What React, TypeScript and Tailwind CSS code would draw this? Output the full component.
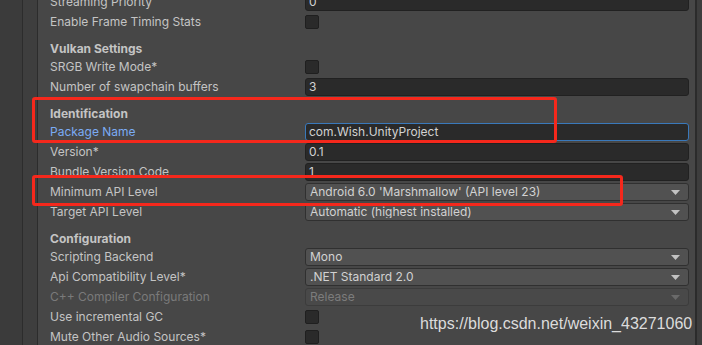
type Row =
  | { kind: "header"; label: string }
  | { kind: "text"; label: string; value: string; focus?: boolean }
  | { kind: "check"; label: string }
  | { kind: "select"; label: string; value: string; disabled?: boolean }

const rows: Row[] = [
  { kind: "text", label: "Streaming Priority", value: "0" },
  { kind: "check", label: "Enable Frame Timing Stats" },
  { kind: "header", label: "Vulkan Settings" },
  { kind: "check", label: "SRGB Write Mode*" },
  { kind: "text", label: "Number of swapchain buffers", value: "3" },
  { kind: "header", label: "Identification" },
  { kind: "text", label: "Package Name", value: "com.Wish.UnityProject", focus: true },
  { kind: "text", label: "Version*", value: "0.1" },
  { kind: "text", label: "Bundle Version Code", value: "1" },
  { kind: "select", label: "Minimum API Level", value: "Android 6.0 'Marshmallow' (API level 23)" },
  { kind: "select", label: "Target API Level", value: "Automatic (highest installed)" },
  { kind: "header", label: "Configuration" },
  { kind: "select", label: "Scripting Backend", value: "Mono" },
  { kind: "select", label: "Api Compatibility Level*", value: ".NET Standard 2.0" },
  { kind: "select", label: "C++ Compiler Configuration", value: "Release", disabled: true },
  { kind: "check", label: "Use incremental GC" },
  { kind: "check", label: "Mute Other Audio Sources*" },
]

function Arrow({ dim }: { dim?: boolean }) {
  return (
    <svg width="9" height="5" viewBox="0 0 9 5" className="shrink-0">
      <path d="M0 0h9L4.5 5z" fill={dim ? "#6a6a6a" : "#c2c2c2"} />
    </svg>
  )
}

function Field({ row }: { row: Row }) {
  if (row.kind === "check") {
    return <div className="w-[14px] h-[14px] rounded-[2px] bg-[#2a2a2a] border border-[#1f1f1f]" />
  }
  if (row.kind === "text") {
    return (
      <div
        className={`h-[18px] flex-1 rounded-[3px] bg-[#2a2a2a] border flex items-center px-[3px] text-[#d2d2d2] ${
          row.focus ? "border-[#3a79bb]" : "border-[#212121]"
        }`}
      >
        {row.value}
      </div>
    )
  }
  if (row.kind === "select") {
    return (
      <div
        className={`h-[18px] flex-1 rounded-[3px] border flex items-center pl-[4px] pr-[8px] ${
          row.disabled
            ? "bg-[#494949] border-[#3c3c3c] text-[#7c7c7c]"
            : "bg-[#515151] border-[#303030] text-[#d2d2d2]"
        }`}
      >
        <span className="flex-1 truncate">{row.value}</span>
        <Arrow dim={row.disabled} />
      </div>
    )
  }
  return null
}

export default function App() {
  return (
    <div
      className="relative w-[702px] h-[345px] overflow-hidden flex bg-[#474747] text-[12px] leading-none"
      style={{ fontFamily: "Inter, 'Noto Sans', sans-serif" }}
    >
      <div className="w-[23px] shrink-0 bg-[#3b3b3b] border-r border-[#2c2c2c]" />
      <div className="w-[15px] shrink-0 bg-[#3e3e3e] border-r border-[#2c2c2c]" />
      <div className="flex-1 pl-[12px] pr-[6px]">
        <div className="-mt-[8px] flex flex-col">
          {rows.map((row, i) =>
            row.kind === "header" ? (
              <div key={i} className="h-[17px] mt-[8px] flex items-center font-bold text-[#c4c4c4]">
                {row.label}
              </div>
            ) : (
              <div key={i} className="h-[20px] flex items-center">
                <div
                  className={`w-[255px] shrink-0 ${
                    row.kind === "text" && row.focus
                      ? "text-[#7babf4]"
                      : row.kind === "select" && row.disabled
                      ? "text-[#7a7a7a]"
                      : "text-[#c4c4c4]"
                  }`}
                >
                  {row.label}
                </div>
                <Field row={row} />
              </div>
            )
          )}
        </div>
      </div>
      <div className="w-[7px] shrink-0 bg-[#3d3d3d] border-l-2 border-[#2b2b2b]" />

      {/* red annotation boxes */}
      <div className="absolute left-[32px] top-[97px] w-[525px] h-[46px] border-[3px] border-[#f5281c] rounded-[3px]" />
      <div className="absolute left-[32px] top-[175px] w-[591px] h-[31px] border-[3px] border-[#f5281c] rounded-[3px]" />

      {/* watermark */}
      <div
        className="absolute left-[420px] top-[316px] text-[16px] text-[#dcdcdc]"
        style={{ fontFamily: "'Liberation Sans', Arial, sans-serif" }}
      >
        https://blog.csdn.net/weixin_43271060
      </div>
    </div>
  )
}
